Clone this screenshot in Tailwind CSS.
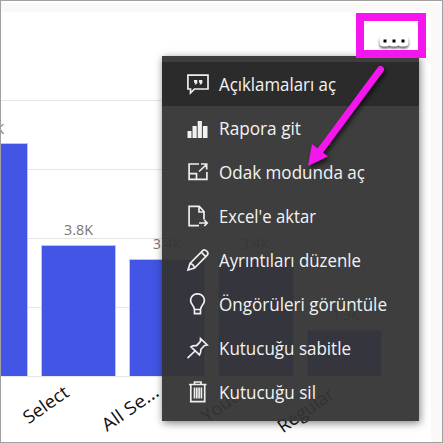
<!DOCTYPE html>
<html lang="tr">
<head>
<meta charset="utf-8">
<title>Pano</title>
<script src="https://cdn.jsdelivr.net/npm/@tailwindcss/browser@4"></script>
</head>
<body class="w-[443px] h-[443px] overflow-hidden bg-white">
<main class="relative w-[443px] h-[443px] overflow-hidden border border-[#a0a0a0] bg-[#faf9f8] pt-[2px] font-['Open_Sans','Noto_Sans',sans-serif]">
  <div class="absolute inset-x-0 top-0 h-[2px] bg-white"></div>
  <div class="mt-[9px] w-[430px] h-[430px] bg-white">
    <svg class="block" width="430" height="430" viewBox="1 12 430 430">
      <g stroke="#e6e6e6" stroke-width="1">
        <path d="M1 100.5H400M1 169.5H400M1 238.5H400M1 307.5H400M1 376.5H400"/>
      </g>
      <g fill="#4255e4" stroke="#bcc3f5" stroke-width="1">
        <path d="M-5 376V143.500H27.500V376M41.500 376V245.500H115.500V376M129.500 376V259.500H204.500V376M218.500 376V259.500H293.500V376M307.500 376V330.500H381.500V376"/>
      </g>
      <g fill="#777" font-size="14" font-family="'Open Sans','Noto Sans',sans-serif">
        <text x="-24" y="134" textLength="28" lengthAdjust="spacingAndGlyphs">5.3K</text>
        <text x="64" y="235" textLength="29" lengthAdjust="spacingAndGlyphs">3.8K</text>
        <text x="153" y="249" textLength="28" lengthAdjust="spacingAndGlyphs">3.4K</text>
        <text x="241" y="249" textLength="28" lengthAdjust="spacingAndGlyphs">3.4K</text>
        <text x="332" y="320" textLength="27" lengthAdjust="spacingAndGlyphs">1.3K</text>
      </g>
      <g fill="#111" font-size="18" font-family="'Open Sans','Noto Sans',sans-serif">
        <text transform="translate(28.5 424.5) rotate(-35)" textLength="51" lengthAdjust="spacingAndGlyphs">Select</text>
        <text transform="translate(107 432) rotate(-35)" textLength="65" lengthAdjust="spacingAndGlyphs">All Se...</text>
        <text transform="translate(207 423) rotate(-35)" textLength="49" lengthAdjust="spacingAndGlyphs">Youth</text>
        <text transform="translate(283 433.5) rotate(-35)" textLength="64" lengthAdjust="spacingAndGlyphs">Regular</text>
      </g>
    </svg>
  </div>

  <nav class="absolute left-[161px] top-[55px] w-[257px] h-[365px] bg-[#343434]/95 pt-[6px] shadow-[1px_2px_8px_rgba(0,0,0,0.5)] text-[18px]">
    <ul class="fill-none stroke-[#eeeeee] stroke-[1.700]">
      <li class="flex h-[44px] items-center bg-[#2b2b2b] pl-[24px] gap-[9px]">
        <svg class="shrink-0" width="24" height="24" viewBox="0 0 24 24"><path d="M1.900 3.100H22V17H8.500L4.500 21V17H1.900Z"/><path class="fill-[#eee] stroke-none" d="M8 8h3.300v3.200L9.700 12.500H8.500l.8-1.700H8ZM13 8h3.300v3.200L14.700 12.500h-1.200l.8-1.700H13Z"/></svg>
        <svg class="shrink-0 overflow-visible fill-[#f3f3f3] stroke-none" width="118" height="30"><text x="0" y="22" textLength="117" lengthAdjust="spacingAndGlyphs">Açıklamaları aç</text></svg>
      </li>
      <li class="flex h-[44px] items-center pl-[24px] gap-[9px]">
        <svg class="shrink-0 fill-[#f1f1f1] stroke-none" width="24" height="24" viewBox="0 0 24 24"><path d="M1.500 15H5.500V22H1.500ZM6.500 10H10.700V22H6.500ZM11.700 5H15.900V22H11.700ZM16.900 10H21.500V22H16.900Z"/></svg>
        <svg class="shrink-0 overflow-visible fill-[#f3f3f3] stroke-none" width="84" height="30"><text x="0" y="22" textLength="82" lengthAdjust="spacingAndGlyphs">Rapora git</text></svg>
      </li>
      <li class="flex h-[44px] items-center pl-[24px] gap-[9px]">
        <svg class="shrink-0" width="24" height="24" viewBox="0 0 24 24"><path d="M13 4H3.100V19.300H20.900V12M3 13.700H10.500V19M13 11.500L20 5M15 4H20.700V9.500"/></svg>
        <svg class="shrink-0 overflow-visible fill-[#f3f3f3] stroke-none" width="148" height="30"><text x="0" y="22" textLength="146" lengthAdjust="spacingAndGlyphs">Odak modunda aç</text></svg>
      </li>
      <li class="flex h-[44px] items-center pl-[24px] gap-[9px]">
        <svg class="shrink-0" width="24" height="24" viewBox="0 0 24 24"><path d="M13 21.700H3.100V2.300H13.200L18 7.500V15.500M13 2.500V8H18M13 19H21M18.300 16L21.200 19L18.300 22"/></svg>
        <svg class="shrink-0 overflow-visible fill-[#f3f3f3] stroke-none" width="100" height="30"><text x="0" y="22" textLength="97" lengthAdjust="spacingAndGlyphs">Excel'e aktar</text></svg>
      </li>
      <li class="flex h-[44px] items-center pl-[24px] gap-[9px]">
        <svg class="shrink-0" width="24" height="24" viewBox="0 0 24 24"><path d="M2 22L4 15.500L16.700 2.600Q18.500 1 20.700 3.200Q22.900 5.400 21.300 7.200L8.500 20ZM4 15.500Q7.500 16 8.500 20M15.200 4.200L19.700 8.700"/></svg>
        <svg class="shrink-0 overflow-visible fill-[#f3f3f3] stroke-none" width="144" height="30"><text x="0" y="22" textLength="142" lengthAdjust="spacingAndGlyphs">Ayrıntıları düzenle</text></svg>
      </li>
      <li class="flex h-[44px] items-center pl-[24px] gap-[9px]">
        <svg class="shrink-0" width="24" height="24" viewBox="0 0 24 24"><path d="M8.500 17.500Q8 15 6.200 12.500C2.500 7.500 6 1.900 11.500 1.900S20.500 7.500 16.800 12.500Q15 15 14.500 17.500ZM8.500 17V21.600H14.500V17"/></svg>
        <svg class="shrink-0 overflow-visible fill-[#f3f3f3] stroke-none" width="170" height="30"><text x="0" y="22" textLength="168" lengthAdjust="spacingAndGlyphs">Öngörüleri görüntüle</text></svg>
      </li>
      <li class="flex h-[44px] items-center pl-[24px] gap-[9px]">
        <svg class="shrink-0" width="24" height="24" viewBox="0 0 24 24"><path d="M14.500 2.700L21.200 9L18.500 9.500L14.800 13.500Q15.300 16.500 13.500 18.900L5 10.800Q7.500 9.100 10.500 9.700L14.300 5.700ZM9 15L1.500 22.200"/></svg>
        <svg class="shrink-0 overflow-visible fill-[#f3f3f3] stroke-none" width="134" height="30"><text x="0" y="22" textLength="132" lengthAdjust="spacingAndGlyphs">Kutucuğu sabitle</text></svg>
      </li>
      <li class="flex h-[44px] items-center pl-[24px] gap-[9px]">
        <svg class="shrink-0" width="24" height="24" viewBox="0 0 24 24"><path d="M3 4.500H20.500M8.500 4V2H15V4M4.800 5V21.700H18.700V5M8.500 7.500V18.500M10.800 7.500V18.500M13.100 7.500V18.500M15.400 7.500V18.500"/></svg>
        <svg class="shrink-0 overflow-visible fill-[#f3f3f3] stroke-none" width="100" height="30"><text x="0" y="22" textLength="97" lengthAdjust="spacingAndGlyphs">Kutucuğu sil</text></svg>
      </li>
    </ul>
  </nav>

  <div class="absolute left-[355px] top-[12px] w-[70px] h-[45px] border-8 border-[#f516ef] bg-white"></div>
  <svg class="absolute left-0 top-0" width="441" height="441" viewBox="1 1 441 441">
    <g class="fill-white drop-shadow-[0px_2px_1px_rgba(0,0,0,0.6)]"><rect x="379.500" y="35.500" width="11" height="11" rx="4"/><rect x="388.500" y="35.500" width="11" height="11" rx="4"/><rect x="397.500" y="35.500" width="11" height="11" rx="4"/></g>
    <path class="fill-black" d="M383.500 39.500h3v3h-3zM392.500 39.500h3v3h-3zM401.500 39.500h3v3h-3z"/>
    <g class="fill-none stroke-[#f516ef] drop-shadow-[2px_3px_2px_rgba(0,0,0,0.6)]">
      <path stroke-width="7" stroke-linecap="round" d="M380.500 69.500L320 151"/>
      <path class="fill-[#f516ef] stroke-none" d="M308 166L312 144L328 156.500Z"/>
    </g>
  </svg>
</main>
</body>
</html>
